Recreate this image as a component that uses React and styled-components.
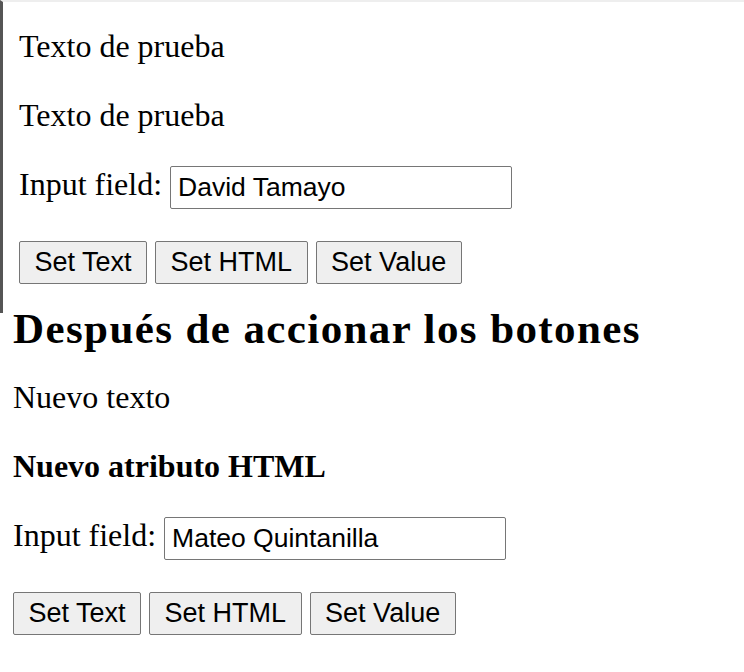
import React from "react";
import styled, { createGlobalStyle } from "styled-components";

const Global = createGlobalStyle`
  html, body { margin: 0; padding: 0; background: #ffffff; }
  body { font-family: "Liberation Serif", "Times New Roman", serif; color: #000; }
`;

const Page = styled.div`
  width: 744px;
  min-height: 672px;
  display: flex;
  flex-direction: column;
`;

const Panel = styled.section`
  border-top: 2px solid #eeeeee;
  border-left: 3px solid #555555;
  padding: 0 0 29px 16px;
  display: flex;
  flex-direction: column;
`;

const Result = styled.section`
  padding-left: 13px;
  display: flex;
  flex-direction: column;
`;

const Line = styled.p`
  margin: ${(p) => p.$top}px 0 0;
  font-size: 32px;
  line-height: 37px;
  font-weight: ${(p) => (p.$bold ? 700 : 400)};
`;

const Heading = styled.h2`
  margin: 1px 0 0;
  font-size: 43px;
  line-height: 30px;
  letter-spacing: 1.4px;
  font-weight: 700;
`;

const InputRow = styled.div`
  margin-top: ${(p) => p.$top}px;
  display: flex;
  align-items: flex-start;
  gap: 8px;
`;

const Label = styled.label`
  font-size: 32px;
  line-height: 37px;
`;

const TextInput = styled.input`
  box-sizing: border-box;
  width: 342px;
  height: 43px;
  margin: 0;
  padding: 0 7px;
  border: 1px solid #767676;
  border-radius: 2px;
  font-family: "Liberation Sans", Arial, sans-serif;
  font-size: 26.5px;
  color: #000;
  background: #fff;
  outline: none;
`;

const ButtonRow = styled.div`
  margin-top: ${(p) => p.$top}px;
  display: flex;
  gap: 8px;
`;

const Button = styled.button`
  box-sizing: border-box;
  height: 43px;
  margin: 0;
  padding: 0 14.5px;
  border: 1px solid #767676;
  border-radius: 2px;
  background: #efefef;
  font-family: "Liberation Sans", Arial, sans-serif;
  font-size: 27px;
  color: #000;
  cursor: pointer;
`;

const Buttons = ({ top }) => (
  <ButtonRow $top={top}>
    <Button>Set Text</Button>
    <Button>Set HTML</Button>
    <Button>Set Value</Button>
  </ButtonRow>
);

export default function App() {
  return (
    <Page>
      <Global />
      <Panel>
        <Line $top={26}>Texto de prueba</Line>
        <Line $top={32}>Texto de prueba</Line>
        <InputRow $top={32}>
          <Label>Input field:</Label>
          <TextInput defaultValue="David Tamayo" />
        </InputRow>
        <Buttons top={32} />
      </Panel>
      <Result>
        <Heading>Después de accionar los botones</Heading>
        <Line $top={35}>Nuevo texto</Line>
        <Line $top={32} $bold>
          Nuevo atributo HTML
        </Line>
        <InputRow $top={32}>
          <Label>Input field:</Label>
          <TextInput defaultValue="Mateo Quintanilla" />
        </InputRow>
        <Buttons top={32} />
      </Result>
    </Page>
  );
}
